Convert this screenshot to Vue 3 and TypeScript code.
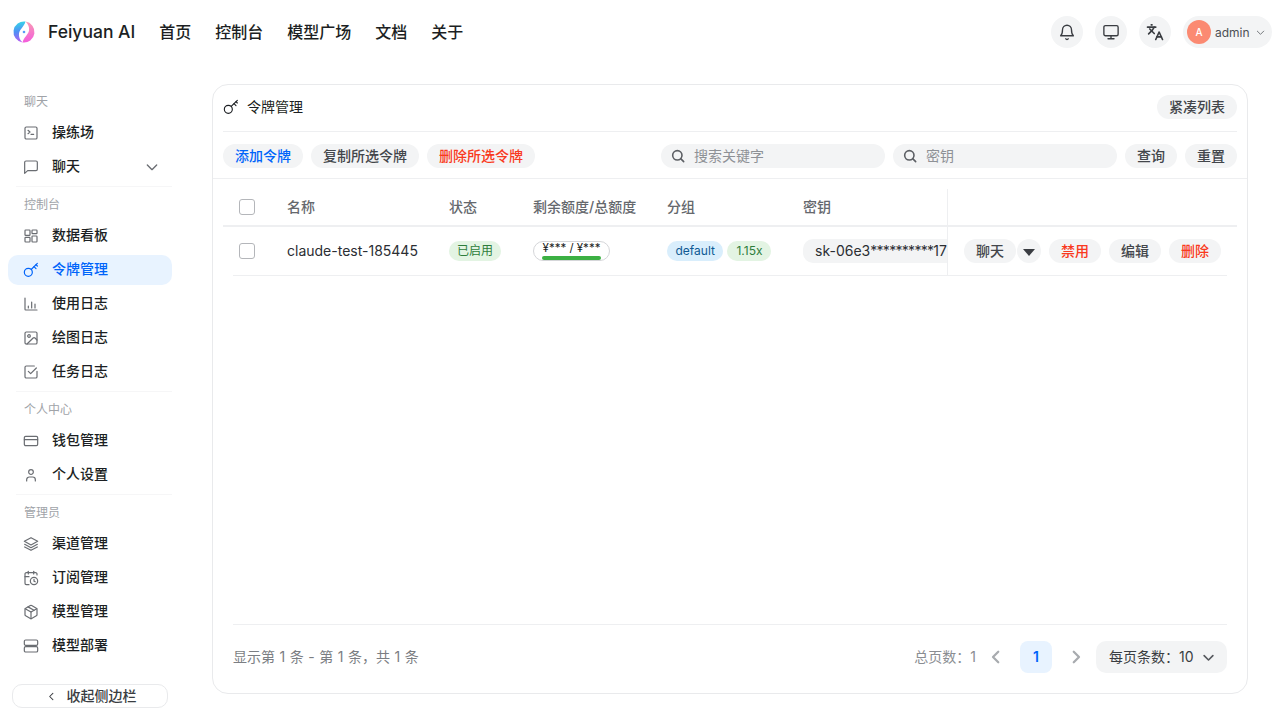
<script setup lang="ts">
interface NavItem {
  label: string
  icon: string
  active?: boolean
  arrow?: boolean
}
interface NavGroup {
  title: string
  items: NavItem[]
}

const topLinks = ['首页', '控制台', '模型广场', '文档', '关于']

const groups: NavGroup[] = [
  {
    title: '聊天',
    items: [
      { label: '操练场', icon: 'terminal' },
      { label: '聊天', icon: 'chat', arrow: true },
    ],
  },
  {
    title: '控制台',
    items: [
      { label: '数据看板', icon: 'dashboard' },
      { label: '令牌管理', icon: 'key', active: true },
      { label: '使用日志', icon: 'chart' },
      { label: '绘图日志', icon: 'image' },
      { label: '任务日志', icon: 'check' },
    ],
  },
  {
    title: '个人中心',
    items: [
      { label: '钱包管理', icon: 'card' },
      { label: '个人设置', icon: 'user' },
    ],
  },
  {
    title: '管理员',
    items: [
      { label: '渠道管理', icon: 'layers' },
      { label: '订阅管理', icon: 'calendar' },
      { label: '模型管理', icon: 'box' },
      { label: '模型部署', icon: 'server' },
    ],
  },
]

const iconPaths: Record<string, string[]> = {
  terminal: ['M3 5a2 2 0 0 1 2-2h14a2 2 0 0 1 2 2v14a2 2 0 0 1-2 2H5a2 2 0 0 1-2-2z', 'm7.500 8 3 2.500-3 2.500', 'M12 14h4'],
  chat: ['M21.500 15.500a2 2 0 0 1-2 2H7l-4.500 4V5a2 2 0 0 1 2-2h15a2 2 0 0 1 2 2z'],
  dashboard: ['M4 3h5.500a1 1 0 0 1 1 1v6a1 1 0 0 1-1 1H4a1 1 0 0 1-1-1V4a1 1 0 0 1 1-1z', 'M14.500 3H20a1 1 0 0 1 1 1v3.500a1 1 0 0 1-1 1h-5.500a1 1 0 0 1-1-1V4a1 1 0 0 1 1-1z', 'M4 14h5.500a1 1 0 0 1 1 1v5a1 1 0 0 1-1 1H4a1 1 0 0 1-1-1v-5a1 1 0 0 1 1-1z', 'M14.500 12h5.500a1 1 0 0 1 1 1v7a1 1 0 0 1-1 1h-5.500a1 1 0 0 1-1-1v-7a1 1 0 0 1 1-1z'],
  key: ['M8 9.500a6 6 0 1 1 0 12 6 6 0 0 1 0-12z', 'M12.300 11.200 21.500 2', 'M16.500 7l3 3', 'M19.500 4l2 2'],
  chart: ['M3 3v17a1 1 0 0 0 1 1h17', 'M8 18v-3', 'M13 18V9', 'M18 18v-6'],
  image: ['M5 3h14a2 2 0 0 1 2 2v14a2 2 0 0 1-2 2H5a2 2 0 0 1-2-2V5a2 2 0 0 1 2-2z', 'M9 7a2 2 0 1 1 0 4 2 2 0 0 1 0-4z', 'm21 15-3-3a2 2 0 0 0-2.800 0L6 21'],
  check: ['M21 11v8a2 2 0 0 1-2 2H5a2 2 0 0 1-2-2V5a2 2 0 0 1 2-2h12', 'm8 11 3.500 3.500L20 6'],
  card: ['M4 5h16a2 2 0 0 1 2 2v10a2 2 0 0 1-2 2H4a2 2 0 0 1-2-2V7a2 2 0 0 1 2-2z', 'M2 10h20'],
  user: ['M12 4a3.500 3.500 0 1 1 0 7 3.500 3.500 0 0 1 0-7z', 'M5.500 21v-2a4 4 0 0 1 4-4h5a4 4 0 0 1 4 4v2'],
  layers: ['M12 2.500 22 8l-10 5.500L2 8z', 'm2.500 12.500 9.500 5 9.500-5', 'm2.500 16.500 9.500 5 9.500-5'],
  calendar: ['M21 7.500V6a2 2 0 0 0-2-2H5a2 2 0 0 0-2 2v14a2 2 0 0 0 2 2h4', 'M16 2v4', 'M8 2v4', 'M3 10h6', 'M16.500 11a5.500 5.500 0 1 1 0 11 5.500 5.500 0 0 1 0-11z', 'M16.500 14v2.700l1.800 1'],
  box: ['M21 8a2 2 0 0 0-1-1.700l-7-4a2 2 0 0 0-2 0l-7 4A2 2 0 0 0 3 8v8a2 2 0 0 0 1 1.700l7 4a2 2 0 0 0 2 0l7-4a2 2 0 0 0 1-1.700z', 'm3.300 7 8.700 5 8.700-5', 'M12 22V12', 'm7.500 4.300 9 5.200'],
  server: ['M4 3h16a2 2 0 0 1 2 2v4a2 2 0 0 1-2 2H4a2 2 0 0 1-2-2V5a2 2 0 0 1 2-2z', 'M4 13h16a2 2 0 0 1 2 2v4a2 2 0 0 1-2 2H4a2 2 0 0 1-2-2v-4a2 2 0 0 1 2-2z'],
}
</script>

<template>
  <div class="page">
    <header class="topbar">
      <div class="brand">
        <svg class="logo" viewBox="0 0 24 24" width="24" height="24">
          <defs>
            <linearGradient id="logoLeft" x1="0.2" y1="0" x2="0.3" y2="1">
              <stop offset="0" stop-color="#35dbe6" />
              <stop offset="0.5" stop-color="#4f8ff5" />
              <stop offset="1" stop-color="#b65cf2" />
            </linearGradient>
            <linearGradient id="logoRight" x1="0.5" y1="0" x2="0.5" y2="1">
              <stop offset="0" stop-color="#f89ab4" />
              <stop offset="1" stop-color="#f45cdc" />
            </linearGradient>
          </defs>
          <path fill="url(#logoLeft)" d="M13.500 1.600A10.500 10.500 0 0 0 10.500 22.400C7.800 20 6.500 16.500 7 13.500 7.600 9.500 12 7 13.500 1.600z" />
          <path fill="url(#logoRight)" d="M10.500 22.400A10.500 10.500 0 0 0 13.500 1.600C16.200 4 17.500 7.500 17 10.500 16.400 14.500 12 17 10.500 22.400z" />
          <circle cx="12" cy="12" r="1.300" fill="#5b9cf5" />
        </svg>
        <span class="brand-name">Feiyuan AI</span>
      </div>
      <nav class="top-links">
        <a v-for="link in topLinks" :key="link">{{ link }}</a>
      </nav>
      <div class="top-actions">
        <button class="round-btn">
          <svg class="top-icon" viewBox="0 0 24 24">
            <path d="M6 9a6 6 0 0 1 12 0c0 6 2.500 8 2.500 8h-17S6 15 6 9z" />
            <path d="M10.300 21a1.900 1.900 0 0 0 3.400 0" />
          </svg>
        </button>
        <button class="round-btn">
          <svg class="top-icon" viewBox="0 0 24 24">
            <rect x="2.500" y="3.500" width="19" height="13.500" rx="2" />
            <path d="M8 21h8M12 17v4" />
          </svg>
        </button>
        <button class="round-btn">
          <svg class="top-icon bold" viewBox="0 0 24 24">
            <path d="m5 8 6 6" />
            <path d="m3.500 14.500 5-5 2.500-4" />
            <path d="M2 5.500h11" />
            <path d="M7 2.500h1" />
            <path d="m22 22-4.500-10L13 22" />
            <path d="M14.500 18.500h6" />
          </svg>
        </button>
        <div class="user-chip">
          <span class="avatar">A</span>
          <span class="user-name">admin</span>
          <svg class="user-caret" viewBox="0 0 24 24"><path d="m5 9 7 7 7-7" /></svg>
        </div>
      </div>
    </header>

    <div class="body">
      <aside class="sidebar">
        <div class="nav-scroll">
          <section v-for="group in groups" :key="group.title" class="nav-group">
            <div class="group-title">{{ group.title }}</div>
            <div class="group-items">
              <a v-for="item in group.items" :key="item.label" class="nav-item" :class="{ active: item.active }">
                <svg class="nav-icon" viewBox="0 0 24 24">
                  <path v-for="d in iconPaths[item.icon]" :key="d" :d="d" />
                </svg>
                <span class="nav-label">{{ item.label }}</span>
                <svg v-if="item.arrow" class="nav-arrow" viewBox="0 0 24 24"><path d="m5 9 7 7 7-7" /></svg>
              </a>
            </div>
          </section>
        </div>
        <button class="collapse-btn">
          <svg class="collapse-icon" viewBox="0 0 24 24"><path d="m15 5-7 7 7 7" /></svg>
          <span>收起侧边栏</span>
        </button>
      </aside>

      <main class="content">
        <div class="card">
          <div class="card-head">
            <div class="card-title">
              <svg class="title-icon" viewBox="0 0 24 24">
                <path v-for="d in iconPaths.key" :key="d" :d="d" />
              </svg>
              <span>令牌管理</span>
            </div>
            <button class="pill">紧凑列表</button>
          </div>

          <div class="toolbar">
            <div class="toolbar-left">
              <button class="pill blue">添加令牌</button>
              <button class="pill">复制所选令牌</button>
              <button class="pill red">删除所选令牌</button>
            </div>
            <div class="toolbar-right">
              <div class="search">
                <svg class="search-icon" viewBox="0 0 24 24"><circle cx="11" cy="11" r="7" /><path d="m20.500 20.500-4.500-4.500" /></svg>
                <span>搜索关键字</span>
              </div>
              <div class="search">
                <svg class="search-icon" viewBox="0 0 24 24"><circle cx="11" cy="11" r="7" /><path d="m20.500 20.500-4.500-4.500" /></svg>
                <span>密钥</span>
              </div>
              <button class="pill">查询</button>
              <button class="pill">重置</button>
            </div>
          </div>

          <div class="table">
            <div class="row head-row">
              <div class="cell c-check"><span class="checkbox"></span></div>
              <div class="cell c-name">名称</div>
              <div class="cell c-status">状态</div>
              <div class="cell c-quota">剩余额度/总额度</div>
              <div class="cell c-group">分组</div>
              <div class="cell c-key">密钥</div>
              <div class="cell c-actions"></div>
            </div>
            <div class="row body-row">
              <div class="cell c-check"><span class="checkbox"></span></div>
              <div class="cell c-name name-text">claude-test-185445</div>
              <div class="cell c-status"><span class="tag green">已启用</span></div>
              <div class="cell c-quota">
                <div class="quota">
                  <span class="quota-text">¥*** / ¥***</span>
                  <span class="quota-bar"></span>
                </div>
              </div>
              <div class="cell c-group">
                <span class="tag blue-tag">default</span>
                <span class="tag green ratio">1.15x</span>
              </div>
              <div class="cell c-key"><span class="key-pill">sk-06e3<span class="stars">**********</span>17</span></div>
              <div class="cell c-actions">
                <div class="split">
                  <button class="pill">聊天</button>
                  <button class="pill caret-btn"><span class="caret"></span></button>
                </div>
                <button class="pill red">禁用</button>
                <button class="pill">编辑</button>
                <button class="pill red">删除</button>
              </div>
            </div>
          </div>

          <div class="pager">
            <span class="pager-info">显示第 1 条 - 第 1 条，共 1 条</span>
            <div class="pager-right">
              <span class="pager-total">总页数：1</span>
              <svg class="pager-arrow" viewBox="0 0 24 24"><path d="m15 5-7 7 7 7" /></svg>
              <span class="page-num">1</span>
              <svg class="pager-arrow" viewBox="0 0 24 24"><path d="m9 5 7 7-7 7" /></svg>
              <div class="page-size">
                <span>每页条数：10</span>
                <svg class="size-caret" viewBox="0 0 24 24"><path d="m5 9 7 7 7-7" /></svg>
              </div>
            </div>
          </div>
        </div>
      </main>
    </div>
  </div>
</template>

<style>
html,
body {
  margin: 0;
  background: #fff;
}
</style>

<style scoped>
.page {
  width: 1280px;
  height: 720px;
  overflow: hidden;
  display: flex;
  flex-direction: column;
  font-family: Inter, 'Noto Sans CJK SC', sans-serif;
  color: #1c1f23;
  background: #fff;
}
button {
  font-family: inherit;
  border: none;
  cursor: pointer;
}
svg {
  fill: none;
  stroke: currentColor;
  stroke-linecap: round;
  stroke-linejoin: round;
}

/* header */
.topbar {
  height: 64px;
  flex: none;
  display: flex;
  align-items: center;
  padding: 0 8px 0 12px;
}
.brand {
  display: flex;
  align-items: center;
  gap: 12px;
}
.logo path,
.logo circle {
  stroke: none;
}
.brand-name {
  font-size: 17.5px;
  font-weight: 500;
  color: #1c1f23;
  padding-bottom: 1px;
}
.top-links {
  display: flex;
  gap: 24px;
  margin-left: 24px;
  padding-bottom: 2px;
}
.top-links a {
  font-size: 16px;
  font-weight: 500;
  color: #1c1f23;
}
.top-actions {
  margin-left: auto;
  display: flex;
  align-items: center;
  gap: 12px;
}
.round-btn {
  width: 32px;
  height: 32px;
  border-radius: 50%;
  background: #f3f4f5;
  display: flex;
  align-items: center;
  justify-content: center;
  padding: 0;
  color: #3a3d42;
}
.top-icon {
  width: 18px;
  height: 18px;
  stroke-width: 1.8;
}
.top-icon.bold {
  stroke-width: 2.2;
}
.user-chip {
  height: 32px;
  width: 89px;
  box-sizing: border-box;
  border-radius: 16px;
  background: #f3f4f5;
  display: flex;
  align-items: center;
  padding-left: 4px;
}
.avatar {
  width: 24px;
  height: 24px;
  border-radius: 50%;
  background: #fb8a72;
  color: #fff;
  font-size: 10px;
  font-weight: 500;
  display: flex;
  align-items: center;
  justify-content: center;
}
.user-name {
  font-size: 12px;
  color: #4c4f54;
  margin-left: 4px;
}
.user-caret {
  width: 11px;
  height: 11px;
  margin-left: 5px;
  color: #6b6e73;
  stroke-width: 2;
}

/* sidebar */
.body {
  flex: 1;
  display: flex;
  min-height: 0;
}
.sidebar {
  width: 180px;
  flex: none;
  display: flex;
  flex-direction: column;
  padding-top: 28px;
  box-sizing: border-box;
}
.nav-scroll {
  flex: 1;
}
.nav-group {
  margin: 0 8px;
}
.nav-group::after {
  content: '';
  display: block;
  height: 1px;
  margin: 4px 0 8px 8px;
  background: #f6f6f7;
}
.nav-group:last-child::after {
  display: none;
}
.group-title {
  height: 20px;
  line-height: 20px;
  font-size: 12px;
  color: #a0a3a8;
  padding-left: 16px;
  margin-bottom: 6px;
}
.group-items {
  display: flex;
  flex-direction: column;
  gap: 4px;
}
.nav-item {
  height: 30px;
  box-sizing: border-box;
  display: flex;
  align-items: center;
  border-radius: 10px;
  padding: 0 12px 0 15px;
  font-size: 14px;
  font-weight: 500;
  color: #1c1f23;
}
.nav-label {
  padding-bottom: 5px;
}
.nav-item.active {
  background: #e8f3ff;
  color: #0064fa;
}
.nav-icon {
  width: 16px;
  height: 16px;
  margin-right: 13px;
  color: #6a6d72;
  stroke-width: 1.8;
  flex: none;
}
.nav-item.active .nav-icon {
  color: #0064fa;
}
.nav-arrow {
  width: 16px;
  height: 16px;
  margin-left: auto;
  color: #6a6d72;
  stroke-width: 2;
}
.collapse-btn {
  margin: 0 12px 12px;
  height: 24px;
  box-sizing: border-box;
  border: 1px solid #e9eaec;
  border-radius: 10px;
  background: #fff;
  font-size: 14px;
  font-weight: 500;
  color: #3a3d42;
  display: flex;
  align-items: center;
  justify-content: center;
  gap: 10px;
  padding: 0 2px 0 4px;
}
.collapse-btn span {
  padding-bottom: 2px;
}
.collapse-icon {
  width: 11px;
  height: 11px;
  stroke-width: 2.2;
}

/* card */
.content {
  flex: 1;
  min-width: 0;
  padding: 20px 32px 26px;
  box-sizing: border-box;
}
.card {
  height: 610px;
  box-sizing: border-box;
  border: 1px solid #e9eaec;
  border-radius: 16px;
  display: flex;
  flex-direction: column;
}
.card-head {
  height: 47px;
  box-sizing: border-box;
  flex: none;
  margin: 0 10px;
  display: flex;
  align-items: center;
  justify-content: space-between;
  border-bottom: 1px solid #eeeff1;
  padding-bottom: 2px;
}
.card-title {
  display: flex;
  align-items: center;
  gap: 8px;
  font-size: 14px;
  color: #1c1f23;
}
.card-title span {
  padding-bottom: 2px;
}
.title-icon {
  width: 16px;
  height: 16px;
  stroke-width: 1.7;
}
.pill {
  height: 24px;
  padding: 0 12px 2px;
  border-radius: 12px;
  background: #f3f4f5;
  font-size: 14px;
  font-weight: 500;
  color: #43464b;
  white-space: nowrap;
}
.pill.blue {
  color: #0064fa;
}
.pill.red {
  color: #f93920;
}
.toolbar {
  height: 47px;
  box-sizing: border-box;
  flex: none;
  padding: 2px 10px 0;
  display: flex;
  align-items: center;
  justify-content: space-between;
  border-bottom: 1px solid #eeeff1;
}
.toolbar-left,
.toolbar-right {
  display: flex;
  align-items: center;
  gap: 8px;
}
.search {
  width: 224px;
  height: 24px;
  box-sizing: border-box;
  border-radius: 12px;
  background: #f3f4f5;
  display: flex;
  align-items: center;
  padding-left: 9px;
  font-size: 14px;
  color: #8e9196;
}
.search span {
  padding-bottom: 2px;
}
.search-icon {
  width: 16px;
  height: 16px;
  margin-right: 8px;
  color: #5c5f64;
  stroke-width: 2.4;
}

/* table */
.table {
  margin: 10px 10px 0;
  flex: 1;
}
.row {
  display: flex;
}
.head-row {
  height: 38px;
  box-sizing: border-box;
  border-bottom: 2px solid #eeeff1;
}
.body-row {
  height: 49px;
}
.cell {
  display: flex;
  align-items: center;
  font-size: 14px;
  flex: none;
  box-sizing: border-box;
}
.head-row .cell {
  color: #65686d;
  font-weight: 500;
}
.head-row .cell:not(.c-check) {
  padding-bottom: 2px;
}
.body-row .cell {
  border-bottom: 1px solid #eeeff1;
}
.c-check {
  width: 64px;
  padding-left: 16px;
}
.body-row .c-check {
  margin-left: 10px;
  width: 54px;
  padding-left: 6px;
}
.c-name {
  width: 162px;
}
.c-status {
  width: 84px;
}
.c-quota {
  width: 134px;
}
.c-group {
  width: 136px;
  gap: 4px;
}
.c-key {
  width: 144px;
  overflow: hidden;
}
.c-actions {
  width: 290px;
  border-left: 1px solid #eeeff1;
  padding-left: 16px;
  gap: 8px;
}
.body-row .c-actions {
  margin-right: 10px;
  width: 280px;
}
.checkbox {
  width: 14px;
  height: 14px;
  border: 1px solid #b4b6ba;
  border-radius: 3px;
  background: #fff;
}
.name-text {
  color: #2b2e33;
  padding-bottom: 2px;
}
.tag {
  height: 20px;
  line-height: 20px;
  padding: 0 8px;
  border-radius: 10px;
  font-size: 12px;
}
.tag.green {
  background: #e3f4e3;
  color: #2e7d3c;
}
.tag.ratio {
  padding: 0 9px;
}
.tag.blue-tag {
  background: #d9eefc;
  color: #0f5a94;
  padding: 0 8.5px;
}
.quota {
  width: 77px;
  height: 20px;
  box-sizing: border-box;
  border: 1px solid #d5d6d9;
  border-radius: 10px;
  display: flex;
  flex-direction: column;
  align-items: center;
  position: relative;
  background: #fff;
}
.quota-text {
  font-size: 11.5px;
  line-height: 13px;
  color: #1c1f23;
}
.quota-bar {
  position: absolute;
  left: 8px;
  right: 8px;
  bottom: 0;
  height: 4px;
  border-radius: 2px;
  background: #3cb043;
}
.key-pill {
  height: 24px;
  line-height: 24px;
  background: #f3f4f5;
  border-radius: 10px;
  padding: 0 12px;
  font-size: 14px;
  white-space: nowrap;
  color: #2b2e33;
}
.stars {
  letter-spacing: -0.7px;
}
.split {
  display: flex;
  gap: 1px;
}
.caret-btn {
  width: 24px;
  padding: 0;
  display: flex;
  align-items: center;
  justify-content: center;
}
.caret {
  width: 0;
  height: 0;
  border-left: 6px solid transparent;
  border-right: 6px solid transparent;
  border-top: 7px solid #3a3d42;
  margin-top: 2px;
}

/* pager */
.pager {
  margin: 0 20px;
  height: 69px;
  flex: none;
  border-top: 1px solid #eeeff1;
  display: flex;
  align-items: center;
  justify-content: space-between;
  padding-bottom: 4px;
  box-sizing: border-box;
}
.pager-info {
  font-size: 14px;
  color: #7b7e83;
  word-spacing: 0.6px;
  padding-bottom: 2px;
}
.pager-right {
  display: flex;
  align-items: center;
  font-size: 14px;
  color: #8a8d92;
}
.pager-total {
  margin-right: 11px;
  padding-bottom: 2px;
}
.pager-arrow {
  width: 18px;
  height: 18px;
  color: #a8abaf;
  stroke-width: 3;
}
.page-num {
  width: 32px;
  height: 32px;
  line-height: 32px;
  text-align: center;
  border-radius: 8px;
  background: #e8f3ff;
  color: #0064fa;
  font-size: 14px;
  font-weight: 600;
  margin: 0 15px;
}
.page-size {
  margin-left: 11px;
  height: 32px;
  width: 131px;
  box-sizing: border-box;
  background: #f3f4f5;
  border-radius: 10px;
  display: flex;
  align-items: center;
  justify-content: space-between;
  padding: 0 11px 0 13px;
  font-size: 14px;
  color: #3a3d42;
}
.page-size span {
  padding-bottom: 2px;
}
.size-caret {
  width: 15px;
  height: 15px;
  stroke-width: 2.6;
  color: #55585d;
}
</style>
